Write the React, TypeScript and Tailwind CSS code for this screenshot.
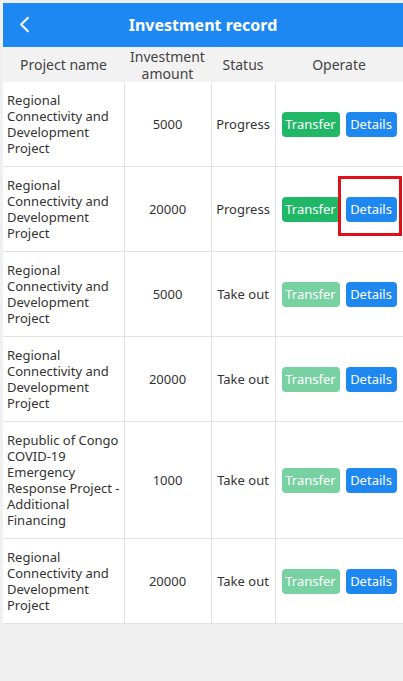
import { ChevronLeft } from "lucide-react";

const ROWS = [
  { name: "Regional Connectivity and Development Project", amount: "5000", status: "Progress", active: true },
  { name: "Regional Connectivity and Development Project", amount: "20000", status: "Progress", active: true, marked: true },
  { name: "Regional Connectivity and Development Project", amount: "5000", status: "Take out", active: false },
  { name: "Regional Connectivity and Development Project", amount: "20000", status: "Take out", active: false },
  {
    name: "Republic of Congo COVID-19 Emergency Response Project - Additional Financing",
    amount: "1000",
    status: "Take out",
    active: false,
  },
  { name: "Regional Connectivity and Development Project", amount: "20000", status: "Take out", active: false },
];

export default function App() {
  return (
    <div className="min-h-[681px] bg-[#f0f0f0] pl-[3px] pt-[3px] font-['Noto_Sans',sans-serif] text-[#333]">
      <header className="relative flex h-[44px] items-center justify-center bg-[#1e88f2] text-white">
        <ChevronLeft className="absolute left-[8px] top-[8px]" size={27} strokeWidth={1.75} />
        <h1 className="text-[16px] font-bold">Investment record</h1>
      </header>

      <table className="w-full table-fixed border-collapse text-[13px] leading-[16px]">
        <colgroup>
          <col className="w-[121px]" />
          <col className="w-[87px]" />
          <col className="w-[64px]" />
          <col />
        </colgroup>
        <thead>
          <tr className="h-[35px] bg-[#f2f2f2] text-[14px] text-[#444]">
            <th className="font-normal">Project name</th>
            <th className="font-normal leading-[17px]">Investment amount</th>
            <th className="font-normal">Status</th>
            <th className="font-normal">Operate</th>
          </tr>
        </thead>
        <tbody className="bg-white">
          {ROWS.map((r, i) => (
            <tr key={i} className="border-b border-[#e3e3e3]">
              <td className="border-r border-[#e3e3e3] px-[4px] py-[10px] align-middle">{r.name}</td>
              <td className="border-r border-[#e3e3e3] text-center">{r.amount}</td>
              <td className="border-r border-[#e3e3e3] text-center">{r.status}</td>
              <td className="px-[6px]">
                <div className="flex items-center gap-[6px]">
                  <button
                    className={`h-[25px] w-[58px] rounded-[4px] text-white ${
                      r.active ? "bg-[#20b767]" : "bg-[#78d1a1]"
                    }`}
                  >
                    Transfer
                  </button>
                  <div className={r.marked ? "relative" : ""}>
                    <button className="h-[25px] w-[51px] rounded-[4px] bg-[#1e87f0] text-white">Details</button>
                    {r.marked && (
                      <span className="absolute left-[-8px] top-[-21px] h-[60px] w-[64px] border-[3px] border-[#e0101a]" />
                    )}
                  </div>
                </div>
              </td>
            </tr>
          ))}
        </tbody>
      </table>
    </div>
  );
}
